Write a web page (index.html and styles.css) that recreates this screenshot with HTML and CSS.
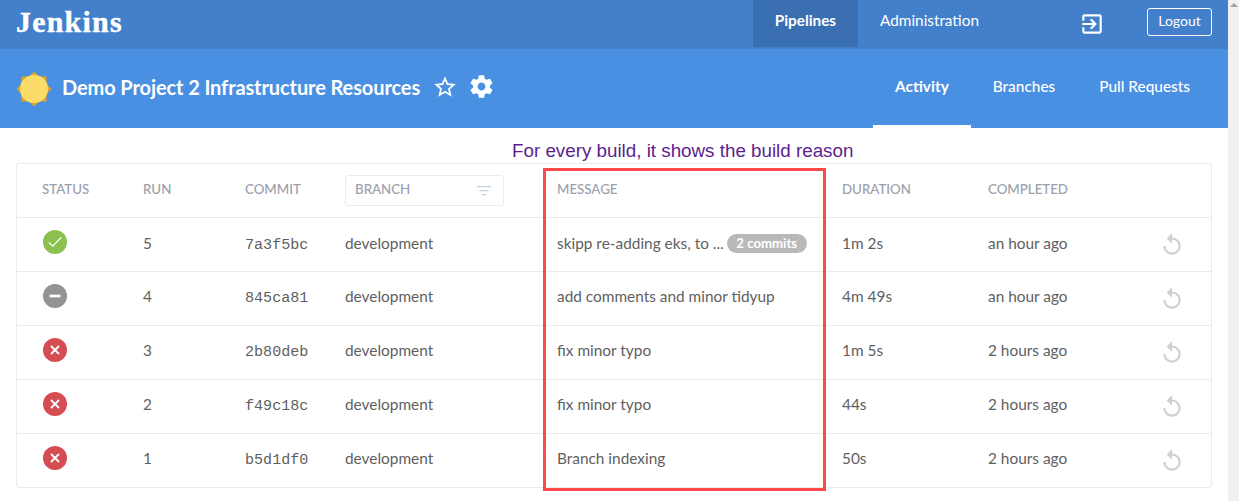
FILE: index.html
```html
<!DOCTYPE html>
<html lang="en">
<head>
<meta charset="utf-8">
<title>Jenkins</title>
<link rel="stylesheet" href="styles.css">
</head>
<body>
<div class="page">
  <header class="topbar">
    <div class="logo">Jenkins</div>
    <nav class="topnav">
      <a class="topnav-item active">Pipelines</a>
      <a class="topnav-item">Administration</a>
    </nav>
    <svg class="exit-icon" viewBox="0 0 24 24"><path d="M10.09 15.59L11.5 17l5-5-5-5-1.41 1.41L12.67 11H3v2h9.67l-2.58 2.59zM19 3H5c-1.11 0-2 .9-2 2v4h2V5h14v14H5v-4H3v4c0 1.1.89 2 2 2h14c1.1 0 2-.9 2-2V5c0-1.1-.9-2-2-2z"/></svg>
    <button class="logout">Logout</button>
  </header>
  <section class="subbar">
    <svg class="weather" viewBox="0 0 36 36">
      <rect class="sun-ray" x="5.5" y="5.5" width="25" height="25"/>
      <polygon class="sun-ray" points="18,0.5 35.5,18 18,35.5 0.5,18"/>
      <circle class="sun-disc" cx="18" cy="18" r="14"/>
    </svg>
    <h1 class="title">Demo Project 2 Infrastructure Resources</h1>
    <svg class="star" viewBox="0 0 24 24"><path d="M22 9.24l-7.19-.62L12 2 9.19 8.63 2 9.24l5.46 4.73L5.82 21 12 17.27 18.18 21l-1.63-7.03L22 9.24zM12 15.4l-3.76 2.27 1-4.28-3.32-2.88 4.38-.38L12 6.1l1.71 4.04 4.38.38-3.32 2.88 1 4.28L12 15.4z"/></svg>
    <svg class="gear" viewBox="0 0 24 24"><path d="M19.43 12.98c.04-.32.07-.64.07-.98s-.03-.66-.07-.98l2.11-1.65c.19-.15.24-.42.12-.64l-2-3.46c-.12-.22-.39-.3-.61-.22l-2.49 1c-.52-.4-1.08-.73-1.69-.98l-.38-2.65C14.46 2.18 14.25 2 14 2h-4c-.25 0-.46.18-.49.42l-.38 2.65c-.61.25-1.17.59-1.69.98l-2.49-1c-.23-.09-.49 0-.61.22l-2 3.46c-.13.22-.07.49.12.64l2.11 1.65c-.04.32-.07.65-.07.98s.03.66.07.98l-2.11 1.65c-.19.15-.24.42-.12.64l2 3.46c.12.22.39.3.61.22l2.49-1c.52.4 1.08.73 1.69.98l.38 2.65c.03.24.24.42.49.42h4c.25 0 .46-.18.49-.42l.38-2.65c.61-.25 1.17-.59 1.69-.98l2.49 1c.23.09.49 0 .61-.22l2-3.46c.12-.22.07-.49-.12-.64l-2.11-1.65zM12 15.5c-1.93 0-3.5-1.57-3.5-3.5s1.57-3.5 3.5-3.5 3.5 1.57 3.5 3.5-1.57 3.5-3.5 3.5z"/></svg>
    <nav class="tabs">
      <a class="tab active">Activity</a>
      <a class="tab">Branches</a>
      <a class="tab">Pull Requests</a>
    </nav>
  </section>
  <main class="content">
    <div class="runs">
      <div class="row head">
        <div>STATUS</div>
        <div>RUN</div>
        <div>COMMIT</div>
        <div><div class="branch-filter"><span>BRANCH</span><svg class="filter-icon" viewBox="0 0 14 10"><path d="M0 0h14v1.3H0zM2.5 4h9v1.3h-9zM5 8h4v1.3H5z"/></svg></div></div>
        <div>MESSAGE</div>
        <div>DURATION</div>
        <div>COMPLETED</div>
        <div></div>
      </div>
      <div class="row">
        <div><svg class="status" viewBox="0 0 24 24"><circle class="ok" cx="12" cy="12" r="12"/><path class="mark thin" d="M5.8 12.4l3.9 3.8 8.6-8.8"/></svg></div>
        <div>5</div><div class="mono">7a3f5bc</div><div>development</div>
        <div class="msg"><span>skipp re-adding eks, to ...</span><span class="badge">2 commits</span></div>
        <div>1m 2s</div><div>an hour ago</div>
        <div><svg class="replay" viewBox="0 0 24 24"><path d="M12 5V1L7 6l5 5V7c3.31 0 6 2.69 6 6s-2.69 6-6 6-6-2.69-6-6H4c0 4.42 3.58 8 8 8s8-3.58 8-8-3.58-8-8-8z"/></svg></div>
      </div>
      <div class="row">
        <div><svg class="status" viewBox="0 0 24 24"><circle class="aborted" cx="12" cy="12" r="12"/><path class="mark thick" d="M6.5 12h11"/></svg></div>
        <div>4</div><div class="mono">845ca81</div><div>development</div>
        <div>add comments and minor tidyup</div>
        <div>4m 49s</div><div>an hour ago</div>
        <div><svg class="replay" viewBox="0 0 24 24"><path d="M12 5V1L7 6l5 5V7c3.31 0 6 2.69 6 6s-2.69 6-6 6-6-2.69-6-6H4c0 4.42 3.58 8 8 8s8-3.58 8-8-3.58-8-8-8z"/></svg></div>
      </div>
      <div class="row">
        <div><svg class="status" viewBox="0 0 24 24"><circle class="failed" cx="12" cy="12" r="12"/><path class="mark" d="M8 8l8 8M16 8l-8 8"/></svg></div>
        <div>3</div><div class="mono">2b80deb</div><div>development</div>
        <div>fix minor typo</div>
        <div>1m 5s</div><div>2 hours ago</div>
        <div><svg class="replay" viewBox="0 0 24 24"><path d="M12 5V1L7 6l5 5V7c3.31 0 6 2.69 6 6s-2.69 6-6 6-6-2.69-6-6H4c0 4.42 3.58 8 8 8s8-3.58 8-8-3.58-8-8-8z"/></svg></div>
      </div>
      <div class="row">
        <div><svg class="status" viewBox="0 0 24 24"><circle class="failed" cx="12" cy="12" r="12"/><path class="mark" d="M8 8l8 8M16 8l-8 8"/></svg></div>
        <div>2</div><div class="mono">f49c18c</div><div>development</div>
        <div>fix minor typo</div>
        <div>44s</div><div>2 hours ago</div>
        <div><svg class="replay" viewBox="0 0 24 24"><path d="M12 5V1L7 6l5 5V7c3.31 0 6 2.69 6 6s-2.69 6-6 6-6-2.69-6-6H4c0 4.42 3.58 8 8 8s8-3.58 8-8-3.58-8-8-8z"/></svg></div>
      </div>
      <div class="row">
        <div><svg class="status" viewBox="0 0 24 24"><circle class="failed" cx="12" cy="12" r="12"/><path class="mark" d="M8 8l8 8M16 8l-8 8"/></svg></div>
        <div>1</div><div class="mono">b5d1df0</div><div>development</div>
        <div>Branch indexing</div>
        <div>50s</div><div>2 hours ago</div>
        <div><svg class="replay" viewBox="0 0 24 24"><path d="M12 5V1L7 6l5 5V7c3.31 0 6 2.69 6 6s-2.69 6-6 6-6-2.69-6-6H4c0 4.42 3.58 8 8 8s8-3.58 8-8-3.58-8-8-8z"/></svg></div>
      </div>
    </div>
    <p class="annotation">For every build, it shows the build reason</p>
    <div class="highlight"></div>
  </main>
</div>
<aside class="scrollbar"><span class="scroll-up"></span></aside>
</body>
</html>
```
FILE: styles.css
```css
* { box-sizing: border-box; }
html, body { height: 100%; margin: 0; overflow: hidden; }
body {
  display: flex;
  background: #fff;
  font-family: Lato, sans-serif;
  color: #5f5f5f;
}
.page { width: 1228px; flex: none; }
.scrollbar { flex: 1; background: #f1f1f1; position: relative; }
.scroll-up {
  position: absolute; top: 3px; left: 2px;
  border-left: 4px solid transparent; border-right: 4px solid transparent;
  border-bottom: 4px solid #a3a3a3;
}

.topbar {
  height: 49px;
  background: #4280cc;
  display: flex;
  align-items: flex-start;
  padding: 0 16px;
  color: #fff;
}
.logo {
  font-family: "Liberation Serif", serif;
  font-weight: 700;
  font-size: 30px;
  line-height: 44px;
  letter-spacing: 1.2px;
  -webkit-text-stroke: 0.4px #fff;
}
.topnav { display: flex; margin-left: auto; }
.topnav-item {
  height: 47px;
  line-height: 41px;
  font-size: 15.3px;
  padding: 0 22px;
}
.topnav-item.active { background: #3a6fb2; font-weight: 700; }
.exit-icon { width: 26px; height: 26px; fill: #fff; margin: 11px 0 0 78px; }
.logout {
  width: 65px; height: 28px;
  margin: 8px 0 0 42px;
  padding: 0 0 3px;
  background: transparent;
  border: 1px solid #fff;
  border-radius: 3px;
  color: #fff;
  font: 400 14px Lato, sans-serif;
}

.subbar {
  height: 79px;
  background: #4a90e2;
  display: flex;
  align-items: center;
  padding-left: 16px;
  color: #fff;
}
.weather { width: 36px; height: 36px; flex: none; }
.sun-ray { fill: #dfa52a; }
.sun-disc { fill: #fcdc69; }
.title { margin: 0 0 4px 10px; font-size: 20px; font-weight: 700; letter-spacing: -0.1px; }
.star { width: 26px; height: 26px; fill: #fff; margin: 0 0 3px 12px; }
.gear { width: 27px; height: 27px; fill: #fff; margin: 0 0 5px 10px; }
.tabs { display: flex; margin-left: auto; height: 100%; margin-right: 16px; }
.tab {
  display: block;
  height: 79px;
  line-height: 75px;
  font-size: 15.4px;
  padding: 0 22px;
  font-weight: 500;
}
.tab.active { font-weight: 700; border-bottom: 3px solid #fff; }

.content { position: relative; padding: 35px 16px 0; }
.runs {
  width: 1196px;
  border: 1px solid #e9ebef;
  border-radius: 3px;
}
.row {
  display: grid;
  grid-template-columns: 101px 102px 100px 212px 285px 146px 172px 1fr;
  align-items: center;
  height: 54px;
  padding: 0 0 3px 25px;
  font-size: 15.4px;
  border-bottom: 1px solid #e9ebef;
}
.row ~ .row ~ .row { padding-bottom: 5px; }
.row:last-child { border-bottom: 0; height: 53px; }
.row.head { font-size: 13.3px; font-weight: 500; color: #9aa0ab; }
.branch-filter {
  width: 159px; height: 31px;
  margin-top: 3px;
  display: flex; align-items: center; justify-content: space-between;
  padding: 0 12px 3px 9px;
  border: 1px solid #e9ebef;
  border-radius: 3px;
}
.filter-icon { width: 14px; height: 10px; fill: #c6d0d8; margin-top: 3px; }
.mono { font-family: "Liberation Mono", monospace; font-size: 15.1px; padding-top: 4px; }
.status { display: block; width: 24px; height: 24px; margin: 0 0 3px 1px; }
.row ~ .row ~ .row .status { margin-bottom: 1px; }
.ok { fill: #8cc04f; }
.aborted { fill: #949393; }
.failed { fill: #d54c53; }
.mark { fill: none; stroke: #fff; stroke-width: 1.8; }
.mark.thin { stroke-width: 1.3; }
.mark.thick { stroke-width: 2.6; }
.msg { display: flex; align-items: center; }
.badge {
  margin-left: 3px;
  width: 80px; height: 19px;
  border-radius: 10px;
  background: #b9b9b9;
  color: #fff;
  font-size: 13.2px;
  font-weight: 700;
  line-height: 18px;
  text-align: center;
}
.replay { display: block; width: 26px; height: 26px; margin: 3px 0 0 -1px; fill: #cdd1d6; }
.row ~ .row ~ .row .replay { margin-top: 5px; }

.annotation {
  position: absolute; left: 512px; top: 12px; margin: 0;
  font: 18.8px "Liberation Sans", sans-serif;
  color: #5c1e8f;
}
.highlight {
  position: absolute; left: 543px; top: 40px;
  width: 283px; height: 323px;
  border: 3px solid #fb4a4a;
}
```
